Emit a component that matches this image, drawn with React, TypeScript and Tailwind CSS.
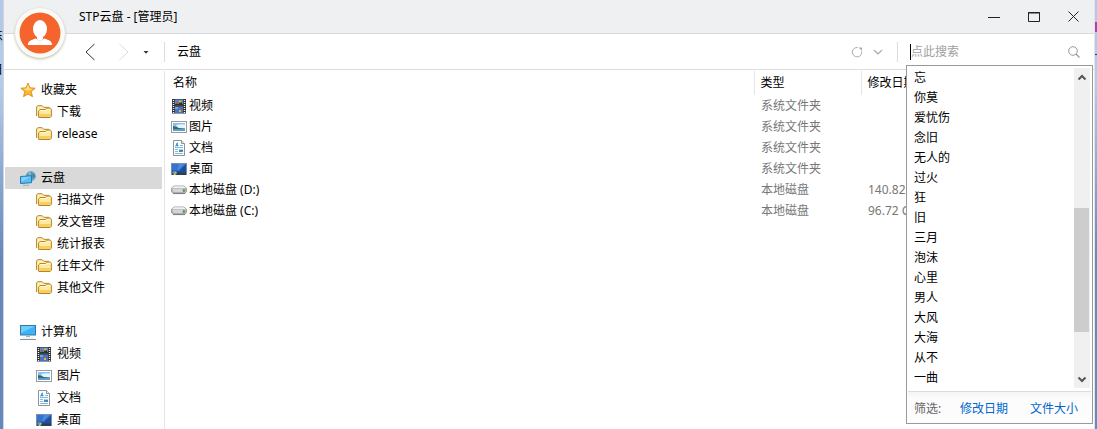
import { useState, type ReactNode } from "react";

type IconName = "star" | "folder" | "cloud" | "computer" | "video" | "picture" | "document" | "desktop" | "disk";

interface TreeGroup {
  label: string;
  icon: IconName;
  children: { label: string; icon: IconName }[];
}

const tree: TreeGroup[] = [
  {
    label: "收藏夹",
    icon: "star",
    children: [
      { label: "下载", icon: "folder" },
      { label: "release", icon: "folder" },
    ],
  },
  {
    label: "云盘",
    icon: "cloud",
    children: [
      { label: "扫描文件", icon: "folder" },
      { label: "发文管理", icon: "folder" },
      { label: "统计报表", icon: "folder" },
      { label: "往年文件", icon: "folder" },
      { label: "其他文件", icon: "folder" },
    ],
  },
  {
    label: "计算机",
    icon: "computer",
    children: [
      { label: "视频", icon: "video" },
      { label: "图片", icon: "picture" },
      { label: "文档", icon: "document" },
      { label: "桌面", icon: "desktop" },
    ],
  },
];

const files: { name: string; icon: IconName; type: string; info: string }[] = [
  { name: "视频", icon: "video", type: "系统文件夹", info: "" },
  { name: "图片", icon: "picture", type: "系统文件夹", info: "" },
  { name: "文档", icon: "document", type: "系统文件夹", info: "" },
  { name: "桌面", icon: "desktop", type: "系统文件夹", info: "" },
  { name: "本地磁盘 (D:)", icon: "disk", type: "本地磁盘", info: "140.82 GB" },
  { name: "本地磁盘 (C:)", icon: "disk", type: "本地磁盘", info: "96.72 GB" },
];

const suggestions = [
  "忘", "你莫", "爱忧伤", "念旧", "无人的", "过火", "狂", "旧",
  "三月", "泡沫", "心里", "男人", "大风", "大海", "从不", "一曲",
];

const drawings: Record<IconName, ReactNode> = {
  star: (
    <>
      <path d="M8 1l2 4.8 5.2.4-4 3.4 1.3 5.1L8 12l-4.5 2.7 1.3-5.1-4-3.4 5.2-.4z" fill="#fcb72c" stroke="#d98218" strokeWidth="0.8" />
      <path d="M8 2.5L9.3 6.5 13 7 8 8.5 3 7l3.5-.6z" fill="#ffe48a" />
    </>
  ),
  folder: (
    <>
      <path d="M.6 12V3L1.800 1.700h4.400l1.500 1.600h5.200l1 1.100v1" fill="#fff0b4" stroke="#b5852c" />
      <path d="M2.600 13.300V6.900L4 5.500h5.400l1.400-1.300h3.600l1 1v7l-1.200 1.300H3z" fill="#fdeaa0" stroke="#b5852c" />
      <path d="M3.200 10h11.700v2.200l-.8.700H3.200z" fill="#f6cf60" />
      <path d="M3.600 7.100L4.400 6.500h5.400l1.300-1.200h3" fill="none" stroke="#fffad7" />
    </>
  ),
  cloud: (
    <>
      <circle cx="10.8" cy="6.2" r="4.9" fill="#5699b8" />
      <path d="M8 3q3-3 5.5-.6L12 6l3 2-4 3z" fill="#82b9c9" />
      <path d="M11 1.5l4.500 4.800-4.500 4z" fill="#3f819f" opacity=".7" />
      <path d="M.5 6.500l11-.8v7l-11 .8z" fill="#57bdf8" stroke="#297daa" />
      <path d="M1.500 7.300l9-.6-9 5z" fill="#81d4ff" />
      <path d="M3 15.300h6" stroke="#9eb0b9" />
    </>
  ),
  computer: (
    <>
      <rect x=".5" y="1.500" width="15" height="9.500" fill="#3db3f7" stroke="#36799e" />
      <path d="M1 2h14L1 9z" fill="#70cdff" />
      <path d="M6 12.500h4" stroke="#9fb2bd" />
      <path d="M0 15.500h16" stroke="#8296a2" />
      <path d="M2 14h12" stroke="#e4ebef" />
    </>
  ),
  video: (
    <>
      <rect x="1" y="1" width="14" height="14.500" fill="#303030" />
      <path d="M2.500 2v13M13.500 2v13" stroke="#eee" strokeWidth="1.400" strokeDasharray="1 1" />
      <rect x="4" y="1.500" width="8" height="6" fill="#5585d8" />
      <rect x="4" y="8.500" width="8" height="6.500" fill="#4674ca" />
      <path d="M4 6h8v1.500H4zM8 4h3v3H8z" fill="#26391f" />
      <path d="M5 4h2v2H5zM9 10h2v1H9z" fill="#d44a2d" />
      <path d="M8 2.500h2.500v2H8zM8 12h2v2H8z" fill="#eeb42e" />
      <path d="M4 9h3v2H4z" fill="#6da4ec" />
    </>
  ),
  picture: (
    <>
      <rect x=".5" y="2.500" width="15" height="11" fill="#fff" stroke="#9b9b9b" />
      <path d="M2 4h12v8H2z" fill="#86bff0" />
      <path d="M5 6q4-1 9-.5V9H7z" fill="#e3f4ff" />
      <path d="M2 7q3 .5 6 2l6 .8v.7H2z" fill="#356b60" />
      <path d="M2 10.300h12V12H2z" fill="#5e9fd2" />
    </>
  ),
  document: (
    <>
      <path d="M2.500.5h8l3 3v12h-11z" fill="#fff" stroke="#8e9195" />
      <path d="M10.500.5v3h3" fill="#eee" stroke="#8e9195" />
      <path d="M4.500 6.500l1.800-3.700v3.700M5 5.500h2.500" fill="none" stroke="#268dcc" strokeWidth=".9" />
      <path d="M9 5.500h3M4 7.500h8M4 9.500h3M4 11.500h3M4 13.500h8" stroke="#5aa9dc" strokeWidth=".8" />
      <path d="M8 9.500h4V12H8z" fill="#4c8ba0" />
      <path d="M8 9.500h4" stroke="#9cd2ef" />
    </>
  ),
  desktop: (
    <>
      <rect x=".5" y="2.500" width="15" height="11" fill="#204e9f" stroke="#7290b5" />
      <path d="M1 3h14L8 10l-7-1z" fill="#3673cf" />
      <path d="M8 3h6L6 10z" fill="#5794df" opacity=".7" />
      <path d="M1 11.500h14V14H1z" fill="#303d4d" />
      <circle cx="3.500" cy="11.700" r="2.200" fill="#3b8bdd" />
      <path d="M2 10.500h1.500V12H2z" fill="#ee7337" />
      <path d="M4 11h1.500v1.500H4z" fill="#a5d14f" />
      <path d="M3 12.500h1.500V14H3z" fill="#f8cb42" />
    </>
  ),
  disk: (
    <>
      <path d="M3 4h10l2.500 2.200v3.300L14 11.300H2L.5 9.500V6.200z" fill="#b2b2b7" stroke="#919196" strokeWidth=".8" />
      <path d="M3 4.200h10l2 2H1z" fill="#f0f0f2" />
      <path d="M1.500 7h10v3h-9z" fill="#d4d4d9" />
      <path d="M12 7.200h1.800v2.500H12z" fill="#40a92d" />
      <path d="M2 11.600h12" stroke="#66666b" strokeWidth=".7" />
    </>
  ),
};

function Icon({ name }: { name: IconName }) {
  return (
    <svg viewBox="0 0 16 16" className="h-4 w-4 shrink-0" aria-hidden="true">
      {drawings[name]}
    </svg>
  );
}

function Avatar() {
  return (
    <button aria-label="管理员" className="absolute left-[11px] top-2 z-10 h-[50px] w-[50px] rounded-full bg-[#fbfbf6] p-1 shadow-[0_1px_3px_#b5b5a5]">
      <svg viewBox="0 0 42 42" className="h-full w-full" aria-hidden="true">
        <circle cx="21" cy="21" r="20.500" fill="#f5642d" />
        <ellipse cx="21" cy="17" rx="7" ry="9" fill="#fff" />
        <path d="M9 33c0-4 2.500-4.800 8-6.500l4 3 4-3c5.500 1.700 8 2.500 8 6.500z" fill="#fff" />
        <path d="M18 24h6v3l-3 2.500-3-2.500z" fill="#fff" />
      </svg>
    </button>
  );
}

function TitleBar() {
  return (
    <header className="flex h-[34px] shrink-0 items-center border-b border-[#d9dadb] bg-[#eff0f2] pl-[75px] pr-3.5">
      <h1 className="flex-1">STP云盘 - [管理员]</h1>
      <div className="flex gap-7 text-[#222]">
        <button aria-label="最小化">
          <svg viewBox="0 0 12 12" className="h-3 w-3"><path d="M0 6.500h12" stroke="currentColor" /></svg>
        </button>
        <button aria-label="最大化">
          <svg viewBox="0 0 12 12" className="h-3 w-3">
            <path d="M.5 1.500h11v9H.5zM0 2h12" fill="none" stroke="currentColor" />
          </svg>
        </button>
        <button aria-label="关闭">
          <svg viewBox="0 0 12 12" className="h-3 w-3"><path d="M.5 .5l10 10M10.500 .5l-10 10" stroke="currentColor" /></svg>
        </button>
      </div>
    </header>
  );
}

function SearchDropdown({ onPick }: { onPick: (word: string) => void }) {
  return (
    <div className="absolute -left-px top-[31px] z-20 w-[187px] border border-[#999] bg-white">
      <div className="flex py-0.5 pr-0.5">
        <ul className="flex-1">
          {suggestions.map((word) => (
            <li key={word}>
              <button className="block h-5 w-full px-[7px] text-left leading-5" onClick={() => onPick(word)}>
                {word}
              </button>
            </li>
          ))}
        </ul>
        <div className="flex w-4 flex-col items-center bg-[#f0f0f0] text-[#555]">
          <svg viewBox="0 0 16 16" className="h-[18px] w-4"><path d="M4.500 10.500L8 7l3.500 3.500" fill="none" stroke="currentColor" strokeWidth="2" /></svg>
          <div className="mt-[122px] h-[124px] w-full border-r border-[#f0f0f0] bg-[#cdcdcd]" />
          <svg viewBox="0 0 16 16" className="mt-auto h-[18px] w-4"><path d="M4.500 6.500L8 10l3.500-3.500" fill="none" stroke="currentColor" strokeWidth="2" /></svg>
        </div>
      </div>
      <div className="mx-px mt-px flex h-8 items-center border-t border-[#dcdcdc] bg-linear-to-b from-[#f4f4f4] to-[#fcfcfc] to-20% px-1.5 pt-0.5">
        <span className="w-[46px] text-[#666]">筛选:</span>
        <a href="#date" className="w-[70px] text-[#0066cc]">修改日期</a>
        <a href="#size" className="text-[#0066cc]">文件大小</a>
      </div>
    </div>
  );
}

function SearchBox() {
  const [query, setQuery] = useState("");

  return (
    <div className="relative flex h-full w-[187px] items-center pl-[3px] pr-3.5">
      <div className="h-4 w-px bg-black" />
      <input
        aria-label="点此搜索"
        placeholder="点此搜索"
        value={query}
        onChange={(e) => setQuery(e.target.value)}
        className="h-5 min-w-0 flex-1 caret-transparent outline-none placeholder:text-[#a0a0a0]"
      />
      <button aria-label="搜索" className="text-[#999]">
        <svg viewBox="0 0 12 12" className="h-3 w-3">
          <circle cx="5" cy="5" r="4.300" fill="none" stroke="currentColor" />
          <path d="M8 8l3.500 3.500" stroke="currentColor" strokeWidth="1.200" />
        </svg>
      </button>
      <SearchDropdown onPick={setQuery} />
    </div>
  );
}

function Toolbar() {
  return (
    <div className="flex h-9 shrink-0 items-center border-b border-[#dcdcdc]">
      <div className="flex w-40 items-center pl-[81px]">
        <button aria-label="后退" className="text-[#333]">
          <svg viewBox="0 0 10 18" className="h-[18px] w-2.5"><path d="M9.500 1L1 9l8.500 8" fill="none" stroke="currentColor" /></svg>
        </button>
        <button aria-label="前进" className="ml-6 text-[#dadada]">
          <svg viewBox="0 0 10 18" className="h-[18px] w-2.5"><path d="M.5 1L9 9l-8.500 8" fill="none" stroke="currentColor" /></svg>
        </button>
        <button aria-label="历史记录" className="ml-3.5 text-[#333]">
          <svg viewBox="0 0 6 4" className="h-1 w-1.5"><path d="M.5 1h5L3 3.700z" fill="currentColor" /></svg>
        </button>
      </div>
      <div className="h-5 w-px bg-[#dcdcdc]" />
      <span className="flex-1 pl-3">云盘</span>
      <button aria-label="刷新" className="text-[#aaa]">
        <svg viewBox="0 0 12 12" className="h-3 w-3">
          <path d="M6.500 1.500A4.700 4.700 0 1 0 10.700 5.500" fill="none" stroke="currentColor" />
          <path d="M7.500 1.500h3.500V5z" fill="currentColor" />
        </svg>
      </button>
      <button aria-label="展开" className="ml-2.5 text-[#aaa]">
        <svg viewBox="0 0 10 6" className="h-1.5 w-2.5"><path d="M1 1l4 4 4-4" fill="none" stroke="currentColor" strokeWidth="1.200" /></svg>
      </button>
      <div className="ml-3.5 mr-[9px] h-5 w-px bg-[#dcdcdc]" />
      <SearchBox />
    </div>
  );
}

function Sidebar() {
  return (
    <nav className="flex w-40 shrink-0 flex-col gap-[22px] pl-px pr-0.5 pt-[9px]">
      {tree.map((group) => (
        <ul key={group.label}>
          <li>
            <a
              href="#group"
              className={`flex h-[22px] items-center gap-[5px] pl-[15px] ${group.icon === "cloud" ? "bg-[#d9d9d9]" : ""}`}
            >
              <Icon name={group.icon} />
              {group.label}
            </a>
          </li>
          {group.children.map((item) => (
            <li key={item.label}>
              <a href="#item" className="flex h-[22px] items-center gap-[5px] pl-[31px]">
                <Icon name={item.icon} />
                {item.label}
              </a>
            </li>
          ))}
        </ul>
      ))}
    </nav>
  );
}

function FileTable() {
  return (
    <table className="h-fit w-full table-fixed text-left">
      <thead>
        <tr className="h-6">
          <th className="pl-2 font-normal">名称</th>
          <th className="w-[107px] border-l border-[#e5e5e5] pl-1.5 font-normal">类型</th>
          <th className="w-[233px] border-l border-[#e5e5e5] pl-1.5 font-normal">修改日期</th>
        </tr>
      </thead>
      <tbody>
        {files.map((file) => (
          <tr key={file.name} className="h-[21px]">
            <td className="pl-1.5">
              <div className="flex items-center gap-0.5">
                <Icon name={file.icon} />
                {file.name}
              </div>
            </td>
            <td className="pl-[7px] text-[#777]">{file.type}</td>
            <td className="pl-[7px] text-[#777]">{file.info}</td>
          </tr>
        ))}
      </tbody>
    </table>
  );
}

export default function App() {
  return (
    <div className="flex h-screen overflow-hidden bg-linear-to-b from-[#b2c8e6] via-[#b5cce8] via-20% to-[#6688bd] to-60% font-['Noto_Sans','Noto_Sans_CJK_SC',sans-serif] text-xs leading-4 text-black">
      {/* slice of the desktop behind the window */}
      <div className="flex w-[3px] shrink-0 flex-col items-end gap-[18px] overflow-hidden pt-7" aria-hidden="true">
        <span>东</span>
        <span>日</span>
      </div>
      <div className="relative flex min-w-0 flex-1 flex-col border-l border-[#d0d5dc] bg-white">
        <Avatar />
        <TitleBar />
        <Toolbar />
        <div className="flex min-h-0 flex-1">
          <Sidebar />
          <main className="mt-px min-w-0 flex-1 overflow-hidden border-l border-[#e5e5e5]">
            <FileTable />
          </main>
        </div>
      </div>
      <div className="flex w-[3px] shrink-0 flex-col gap-[22px] border-l border-[#dfe5ec] pt-[22px]" aria-hidden="true">
        <div className="h-2.5 bg-[#a944ad]" />
        <div className="h-px bg-[#173b83]" />
      </div>
    </div>
  );
}
